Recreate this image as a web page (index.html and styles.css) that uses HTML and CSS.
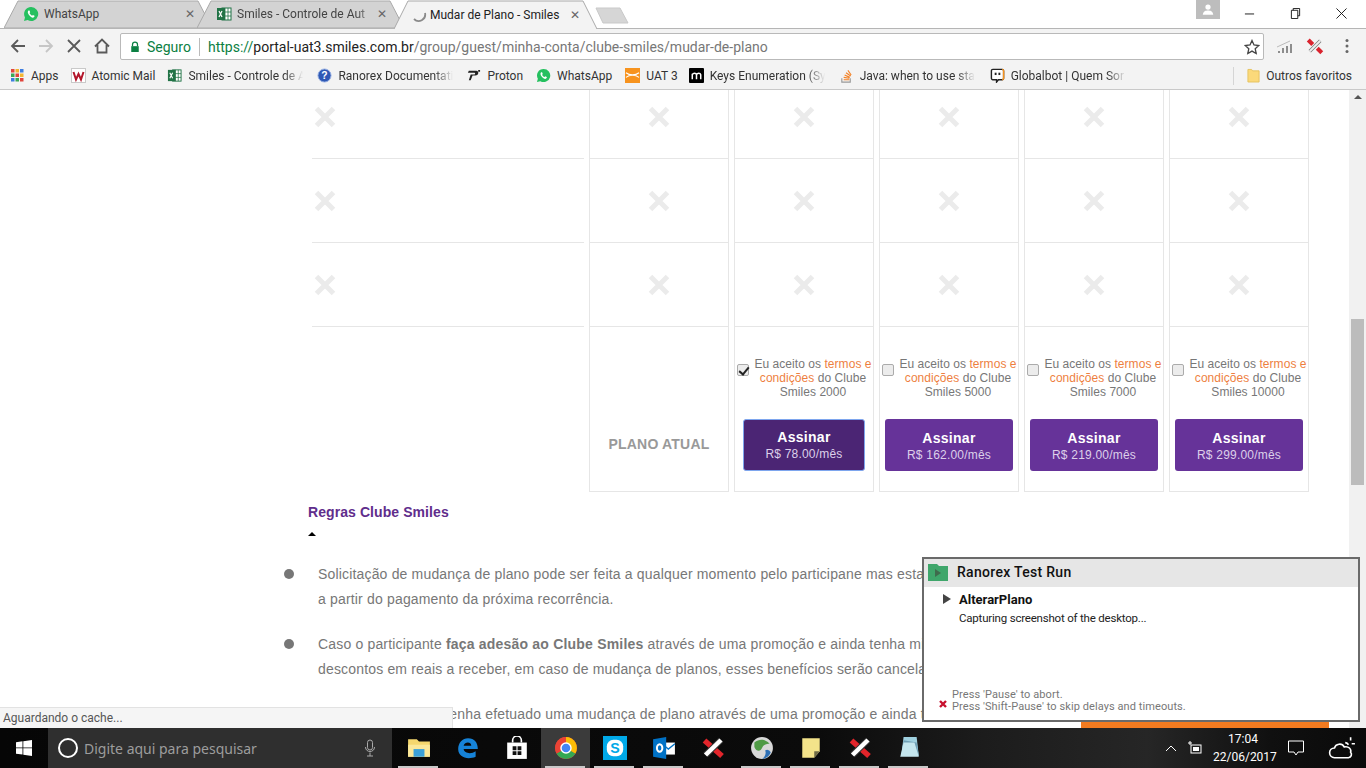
FILE: index.html
```html
<!DOCTYPE html>
<html lang="pt-BR">
<head>
  <meta charset="UTF-8">
  <meta name="viewport" content="width=device-width, initial-scale=1.0">
  <title>Mudar de Plano - Smiles</title>
  <link rel="stylesheet" href="styles.css">
</head>
<body>
  <svg width="0" height="0" class="defs">
    <defs>
      <symbol id="cross" viewBox="0 0 22 22">
        <path d="M2.500 2.500l17 17M19.500 2.500l-17 17" stroke="#ebebeb" stroke-width="5" fill="none"/>
      </symbol>
      <symbol id="whatsapp" viewBox="0 0 16 16">
        <path d="M8 1a7 7 0 0 0-6 10.500L1 15l3.600-1A7 7 0 1 0 8 1z" fill="#25c05f"/>
        <path d="M5.500 4.500c-1 1-1 2.500.5 4.500s3.500 3 4.500 2.500 1.200-1.500 1-1.800l-1.600-.8-.8.8c-1-.3-2.200-1.500-2.600-2.600l.7-.8-.7-1.700c-.3-.2-.7-.3-1 0z" fill="#fff"/>
      </symbol>
      <symbol id="excel" viewBox="0 0 16 16">
        <rect x="6" y="2" width="9" height="12" fill="#fff" stroke="#217346"/>
        <path d="M9 2v12M12 2v12M6 6h9M6 10h9" stroke="#217346" stroke-width=".8"/>
        <rect x="1" y="2" width="8" height="12" fill="#217346"/>
        <path d="M3 5l3 6M6 5l-3 6" stroke="#fff" stroke-width="1.200"/>
      </symbol>
      <symbol id="ranorex" viewBox="0 0 24 24">
        <path d="M3.500 4.500L21 20" stroke="#e2252b" stroke-width="5.500" fill="none"/>
        <path d="M20 4L4.500 19" stroke="#333" stroke-width="6.500" fill="none"/>
        <path d="M20 4L4.500 19" stroke="#fff" stroke-width="4.500" fill="none"/>
      </symbol>
    </defs>
  </svg>

  <div class="screen">
    <header class="browser">
      <div class="tabstrip">
        <div class="tab tab-first">
          <svg class="tab-shape" viewBox="0 0 208 28" preserveAspectRatio="none"><path d="M0 28L14 1H194L208 28z" fill="#d3d3d3" stroke="#a9a9a9"/></svg>
          <svg class="tab-icon"><use href="#whatsapp"/></svg>
          <span class="tab-title">WhatsApp</span>
          <span class="tab-close">✕</span>
        </div>
        <div class="tab tab-second">
          <svg class="tab-shape" viewBox="0 0 207 28" preserveAspectRatio="none"><path d="M0 28L14 1H193L207 28z" fill="#d3d3d3" stroke="#a9a9a9"/></svg>
          <svg class="tab-icon"><use href="#excel"/></svg>
          <span class="tab-title tab-fade">Smiles - Controle de Aut</span>
          <span class="tab-close">✕</span>
        </div>
        <div class="tab tab-active">
          <svg class="tab-shape" viewBox="0 0 203 29" preserveAspectRatio="none"><path d="M0 29L14 1H189L203 29" fill="#f3f3f3" stroke="#a9a9a9"/></svg>
          <svg class="tab-icon" viewBox="0 0 16 16"><path d="M14 6a6.500 6.500 0 0 1-11 6" fill="none" stroke="#8a8a8a" stroke-width="1.800"/></svg>
          <span class="tab-title">Mudar de Plano - Smiles</span>
          <span class="tab-close">✕</span>
        </div>
        <svg class="newtab" viewBox="0 0 34 17"><path d="M1 1H25L33 16H8z" fill="#d6d6d6" stroke="#c9c9c9"/></svg>
        <div class="window-btns">
          <span class="profile">
            <svg viewBox="0 0 24 24" width="14" height="14"><circle cx="12" cy="7" r="4.500" fill="#fff"/><path d="M3 20c1-6 5-7 9-7s8 1 9 7z" fill="#fff"/></svg>
          </span>
          <svg class="win-icon" viewBox="0 0 12 12"><path d="M1 6.500h10" stroke="#111"/></svg>
          <svg class="win-icon" viewBox="0 0 12 12"><path d="M3.500 2.500v-2h7v8h-2M1.500 2.500h7v9h-7z" fill="none" stroke="#111"/></svg>
          <svg class="win-icon" viewBox="0 0 12 12"><path d="M.5.500l11 11M11.500.500l-11 11" stroke="#111"/></svg>
        </div>
      </div>

      <div class="toolbar">
        <svg class="nav-btn" viewBox="0 0 16 16"><path d="M15 8H2M8 2L2 8l6 6" fill="none" stroke="#5a5a5a" stroke-width="1.800"/></svg>
        <svg class="nav-btn" viewBox="0 0 16 16"><path d="M1 8h13M8 2l6 6-6 6" fill="none" stroke="#c6c6c6" stroke-width="1.800"/></svg>
        <svg class="nav-btn" viewBox="0 0 16 16"><path d="M2 2l12 12M14 2L2 14" fill="none" stroke="#5a5a5a" stroke-width="1.800"/></svg>
        <svg class="nav-btn" viewBox="0 0 16 16"><path d="M1 8.500L8 1.500l7 7M3.500 7v7.500h9V7" fill="none" stroke="#5a5a5a" stroke-width="1.800"/></svg>
        <div class="omnibox">
          <svg class="lock" viewBox="0 0 12 14"><path d="M3 6V4a3 3 0 0 1 6 0v2" fill="none" stroke="#0b8043" stroke-width="1.500"/><rect x="1.500" y="6" width="9" height="7" fill="#0b8043"/></svg>
          <span class="secure">Seguro</span>
          <span class="omni-sep"></span>
          <span class="url"><span class="url-scheme">https://</span><span class="url-host">portal-uat3.smiles.com.br</span>/group/guest/minha-conta/clube-smiles/mudar-de-plano</span>
          <svg class="star" viewBox="0 0 16 16"><path d="M8 1.500l2 4.500 4.800.500-3.600 3.200 1 4.800L8 12.100l-4.200 2.400 1-4.800L1.200 6.500 6 6z" fill="none" stroke="#444" stroke-width="1.300"/></svg>
        </div>
        <svg class="ext-icon" viewBox="0 0 18 14"><path d="M1 8l13-6" stroke="#bbb"/><path d="M2 14v-2h2v2zM6 14v-5h2v5zM10 14V7h2v7zM14 14V5h2v9z" fill="#8d8d8d"/></svg>
        <svg class="ext-icon" viewBox="0 0 24 24"><path d="M19 5L5 19" stroke="#777" stroke-width="4.500"/><path d="M19 5L5 19" stroke="#eee" stroke-width="2.500"/><path d="M3 4l6 6M15 15l6 6" stroke="#d9232e" stroke-width="5.500"/></svg>
        <svg class="ext-menu" viewBox="0 0 4 16"><circle cx="2" cy="2.500" r="1.500" fill="#666"/><circle cx="2" cy="8" r="1.500" fill="#666"/><circle cx="2" cy="13.500" r="1.500" fill="#666"/></svg>
      </div>

      <div class="bookmarks">
        <a class="bm">
          <svg class="bm-icon" viewBox="0 0 15 15">
            <rect x="1" y="1" width="3.500" height="3.500" fill="#e1453c"/><rect x="5.500" y="1" width="3.500" height="3.500" fill="#f2b632"/><rect x="10" y="1" width="3.500" height="3.500" fill="#3d7de0"/>
            <rect x="1" y="5.500" width="3.500" height="3.500" fill="#3aa757"/><rect x="5.500" y="5.500" width="3.500" height="3.500" fill="#e1453c"/><rect x="10" y="5.500" width="3.500" height="3.500" fill="#f2b632"/>
            <rect x="1" y="10" width="3.500" height="3.500" fill="#3d7de0"/><rect x="5.500" y="10" width="3.500" height="3.500" fill="#3aa757"/><rect x="10" y="10" width="3.500" height="3.500" fill="#e1453c"/>
          </svg>Apps</a>
        <a class="bm">
          <svg class="bm-icon" viewBox="0 0 15 15"><rect x=".5" y=".5" width="14" height="14" fill="#fff" stroke="#c9c9c9"/><path d="M2.500 4l2.500 7.500L7.500 6l2.500 5.500L12.500 4" fill="none" stroke="#b3162b" stroke-width="2"/></svg>Atomic Mail</a>
        <a class="bm bm-long">
          <svg class="bm-icon"><use href="#excel"/></svg><span class="bm-fade">Smiles - Controle de A</span></a>
        <a class="bm bm-long">
          <svg class="bm-icon" viewBox="0 0 16 16"><circle cx="8" cy="8" r="7" fill="#2f59b5" stroke="#9db4e4"/><text x="8" y="12" class="bm-q">?</text></svg><span class="bm-fade">Ranorex Documentati</span></a>
        <a class="bm">
          <svg class="bm-icon" viewBox="0 0 16 16"><path d="M3 3h8c3 0 3 5-1 5H7l-2 5H3l2-6h4c1 0 1-2 0-2H2zM13 2h2v2h-2z" fill="#222"/></svg>Proton</a>
        <a class="bm">
          <svg class="bm-icon"><use href="#whatsapp"/></svg>WhatsApp</a>
        <a class="bm">
          <svg class="bm-icon" viewBox="0 0 16 16"><rect width="16" height="16" fill="#f7931e"/><path d="M1 5c4 3 10 3 14 0M1 10c4-3 10-3 14 0" fill="none" stroke="#fff" stroke-width="1.200"/></svg>UAT 3</a>
        <a class="bm bm-long">
          <svg class="bm-icon" viewBox="0 0 16 16"><rect width="16" height="16" rx="1" fill="#000"/><path d="M3.500 12V6M3.500 7c1-2 4-2 4.500 0v5M8 7c1-2 4-2 4.500 0v5" fill="none" stroke="#fff" stroke-width="1.600"/></svg><span class="bm-fade">Keys Enumeration (Sy</span></a>
        <a class="bm bm-long">
          <svg class="bm-icon" viewBox="0 0 16 16"><path d="M3 11v4h9v-4" fill="none" stroke="#9a9a9a" stroke-width="1.200"/><path d="M5 12.500h6M5 10l6 1M6 7.500l5.500 2.500M7.500 5l5 3.500M9.500 2.500l3.500 5" fill="none" stroke="#f48024" stroke-width="1.200"/></svg><span class="bm-fade">Java: when to use stat</span></a>
        <a class="bm bm-long">
          <svg class="bm-icon" viewBox="0 0 16 16"><path d="M3 1.500h10a1.500 1.500 0 0 1 1.500 1.500v8a1.500 1.500 0 0 1-1.500 1.500H9l-2 2.500v-2.500H3A1.500 1.500 0 0 1 1.500 11V3A1.500 1.500 0 0 1 3 1.500z" fill="#fff" stroke="#222" stroke-width="1.500"/><path d="M13 1.500a1.500 1.500 0 0 1 1.500 1.500v8a1.500 1.500 0 0 1-1.500 1.500" fill="none" stroke="#f7931e" stroke-width="1.500"/><rect x="5" y="5" width="2" height="2.500" fill="#222"/><rect x="9" y="5" width="2" height="2.500" fill="#222"/></svg><span class="bm-fade">Globalbot | Quem Sor</span></a>
        <span class="bm-spacer"></span>
        <span class="bm-sep"></span>
        <a class="bm bm-other">
          <svg class="bm-folder" viewBox="0 0 14 16"><path d="M1 1.500h4l1 1.500h7v12H1z" fill="#fbd97a" stroke="#e6c25e"/></svg>Outros favoritos</a>
      </div>
    </header>

    <main class="viewport">
      <div class="page">
        <section class="plans">
          <div class="plan-row">
            <div class="feature"><svg class="cross"><use href="#cross"/></svg></div>
            <div class="plan-cell"><svg class="cross"><use href="#cross"/></svg></div>
            <div class="plan-cell"><svg class="cross"><use href="#cross"/></svg></div>
            <div class="plan-cell"><svg class="cross"><use href="#cross"/></svg></div>
            <div class="plan-cell"><svg class="cross"><use href="#cross"/></svg></div>
            <div class="plan-cell"><svg class="cross"><use href="#cross"/></svg></div>
          </div>
          <div class="plan-row">
            <div class="feature"><svg class="cross"><use href="#cross"/></svg></div>
            <div class="plan-cell"><svg class="cross"><use href="#cross"/></svg></div>
            <div class="plan-cell"><svg class="cross"><use href="#cross"/></svg></div>
            <div class="plan-cell"><svg class="cross"><use href="#cross"/></svg></div>
            <div class="plan-cell"><svg class="cross"><use href="#cross"/></svg></div>
            <div class="plan-cell"><svg class="cross"><use href="#cross"/></svg></div>
          </div>
          <div class="plan-row">
            <div class="feature"><svg class="cross"><use href="#cross"/></svg></div>
            <div class="plan-cell"><svg class="cross"><use href="#cross"/></svg></div>
            <div class="plan-cell"><svg class="cross"><use href="#cross"/></svg></div>
            <div class="plan-cell"><svg class="cross"><use href="#cross"/></svg></div>
            <div class="plan-cell"><svg class="cross"><use href="#cross"/></svg></div>
            <div class="plan-cell"><svg class="cross"><use href="#cross"/></svg></div>
          </div>
          <div class="plan-row plan-row-last">
            <div class="feature-empty"></div>
            <div class="plan-cell plan-current">PLANO ATUAL</div>
            <div class="plan-cell plan-buy">
              <label class="terms"><input type="checkbox" checked><span>Eu aceito os <a>termos e</a><br><a>condições</a> do Clube<br>Smiles 2000</span></label>
              <button class="subscribe subscribe-focus"><b>Assinar</b><span>R$ 78.00/mês</span></button>
            </div>
            <div class="plan-cell plan-buy">
              <label class="terms"><input type="checkbox"><span>Eu aceito os <a>termos e</a><br><a>condições</a> do Clube<br>Smiles 5000</span></label>
              <button class="subscribe"><b>Assinar</b><span>R$ 162.00/mês</span></button>
            </div>
            <div class="plan-cell plan-buy">
              <label class="terms"><input type="checkbox"><span>Eu aceito os <a>termos e</a><br><a>condições</a> do Clube<br>Smiles 7000</span></label>
              <button class="subscribe"><b>Assinar</b><span>R$ 219.00/mês</span></button>
            </div>
            <div class="plan-cell plan-buy">
              <label class="terms"><input type="checkbox"><span>Eu aceito os <a>termos e</a><br><a>condições</a> do Clube<br>Smiles 10000</span></label>
              <button class="subscribe"><b>Assinar</b><span>R$ 299.00/mês</span></button>
            </div>
          </div>
        </section>

        <section class="rules">
          <h3 class="rules-title">Regras Clube Smiles</h3>
          <span class="rules-caret"></span>
          <ul class="rules-list">
            <li>Solicitação de mudança de plano pode ser feita a qualquer momento pelo participane mas esta<br>a partir do pagamento da próxima recorrência.</li>
            <li>Caso o participante <strong>faça adesão ao Clube Smiles</strong> através de uma promoção e ainda tenha mi<br>descontos em reais a receber, em caso de mudança de planos, esses benefícios serão cancela</li>
            <li>Se o participante já tenha efetuado uma mudança de plano através de uma promoção e ainda t</li>
          </ul>
        </section>
      </div>
      <div class="orange-bar"></div>
      <div class="scrollbar">
        <span class="scroll-up"></span>
        <span class="scroll-thumb"></span>
      </div>
      <div class="status-bubble">Aguardando o cache...</div>

      <aside class="ranorex">
        <div class="ranorex-head">
          <svg class="ranorex-logo" viewBox="0 0 20 17"><path d="M0 0h9l2 2h9v15H0z" fill="#3fa66b"/><path d="M7 5l6 4-6 4z" fill="#3f6b4d"/></svg>
          <span>Ranorex Test Run</span>
        </div>
        <div class="ranorex-body">
          <div class="ranorex-case"><span class="ranorex-play"></span>AlterarPlano</div>
          <div class="ranorex-msg">Capturing screenshot of the desktop...</div>
        </div>
        <div class="ranorex-foot">
          <svg class="ranorex-x" viewBox="0 0 8 8"><path d="M1 1l6 6M7 1L1 7" stroke="#c8102e" stroke-width="2.400"/></svg>
          <span>Press 'Pause' to abort.<br>Press 'Shift-Pause' to skip delays and timeouts.</span>
        </div>
      </aside>
    </main>

    <footer class="taskbar">
      <span class="start">
        <svg viewBox="0 0 16 16" width="16" height="16"><path d="M0 2.200l6.500-.9v6.200H0zM7.300 1.200L16 0v7.500H7.300zM0 8.300h6.500v6.300L0 13.700zM7.300 8.300H16V16l-8.700-1.200z" fill="#fff"/></svg>
      </span>
      <div class="search">
        <span class="cortana"></span>
        <span class="search-text">Digite aqui para pesquisar</span>
        <svg class="mic" viewBox="0 0 12 18"><rect x="3.500" y="1" width="5" height="10" rx="2.500" fill="none" stroke="#aaa"/><path d="M1.500 8c0 6 9 6 9 0M6 13.500V17M3 17h6" fill="none" stroke="#aaa"/></svg>
      </div>
      <div class="task-icons">
        <span class="task task-run"><svg viewBox="0 0 22 20"><path d="M1 2h8l2 2h10v14H1z" fill="#f5d76e"/><rect x="1" y="7" width="20" height="11" fill="#fbe89a"/><rect x="6" y="11" width="10" height="7" fill="#3aa0d8"/></svg></span>
        <span class="task"><svg viewBox="0 0 22 22"><path d="M11 2c6 0 9 4 9 10H7c.5 4 7 5 11 2v5c-7 3-16 1-16-7C2 6 6 2 11 2zm3 7c0-4-6-4-7 0z" fill="#1683d8"/></svg></span>
        <span class="task"><svg viewBox="0 0 22 22"><path d="M7 6V4a4 4 0 0 1 8 0v2" fill="none" stroke="#fff" stroke-width="1.500"/><path d="M2 6h18v15H2z" fill="#fff"/><path d="M7 9.500h3.500v3.500H7zM11.500 9.500H15v3.500h-3.500zM7 14h3.500v3.500H7zM11.500 14H15v3.500h-3.500z" fill="#111"/></svg></span>
        <span class="task task-open task-run"><svg viewBox="0 0 22 22"><circle cx="11" cy="11" r="10" fill="#ea4335"/><path d="M11 11L19.660 16A10 10 0 0 1 2.340 16z" fill="#34a853"/><path d="M11 1a10 10 0 0 1 8.660 15L11 11z" fill="#fbbc05"/><path d="M11 1a10 10 0 0 0-8.660 15L11 11z" fill="#ea4335"/><circle cx="11" cy="11" r="4.600" fill="#4285f4" stroke="#fff" stroke-width="1.300"/></svg></span>
        <span class="task task-run"><svg viewBox="0 0 22 22"><rect width="22" height="22" fill="#00a9e8"/><rect x="3.500" y="3.500" width="15" height="15" rx="6" fill="#fff"/><text x="11" y="16" class="task-s">S</text></svg></span>
        <span class="task task-run"><svg viewBox="0 0 22 22"><rect x="9" y="6" width="12" height="11" fill="#fff"/><path d="M9 7l6 5 6-5" fill="none" stroke="#0072c6" stroke-width="1.200"/><path d="M1 3l12-2v20L1 19z" fill="#0072c6"/><ellipse cx="7" cy="11" rx="2.500" ry="3.500" fill="none" stroke="#fff" stroke-width="1.800"/></svg></span>
        <span class="task"><svg viewBox="0 0 24 24"><use href="#ranorex"/></svg></span>
        <span class="task task-run"><svg viewBox="0 0 22 22"><circle cx="11" cy="11" r="10" fill="#d8d8d8"/><path d="M4 6c5-4 10-3 14 1-3 0-6 1-7 4s-5 4-7-1z" fill="#4f9a45"/><path d="M14 13a4 4 0 0 1 5 2c-1 3-4 6-8 6 3-2 4-5 3-8z" fill="#2c6fb5"/></svg></span>
        <span class="task task-run"><svg viewBox="0 0 22 22"><path d="M3 2h16v12l-5 6H3z" fill="#f3e38a"/><path d="M14 20v-6h5z" fill="#6e6a45"/></svg></span>
        <span class="task task-run"><svg viewBox="0 0 24 24"><use href="#ranorex"/></svg></span>
        <span class="task task-run"><svg viewBox="0 0 22 22"><path d="M6 1h12l2 17H4z" fill="#9fd0df"/><path d="M4 18l2-14 12 2 2 12z" fill="#6f9fb5"/><path d="M3 19l3-13h10l4 13z" fill="#c5e6ee"/></svg></span>
      </div>
      <div class="tray">
        <svg class="tray-caret" viewBox="0 0 12 7"><path d="M1 6l5-5 5 5" fill="none" stroke="#fff"/></svg>
        <svg class="tray-power" viewBox="0 0 16 14"><rect x="4" y="4" width="10" height="8" fill="none" stroke="#fff"/><rect x="6" y="6" width="6" height="4" fill="#fff"/><path d="M1 2h4M3 0v4" stroke="#fff"/></svg>
        <div class="clock">17:04<br>22/06/2017</div>
        <svg class="tray-notify" viewBox="0 0 16 16"><path d="M.5 1h15v11H10l-2 3-2-3H.5z" fill="none" stroke="#fff"/></svg>
        <svg class="tray-weather" viewBox="0 0 26 24"><path d="M6 21a4.500 4.500 0 0 1 0-9c1-4 7-5 9-1 4-1 7 2 6 5a3 3 0 0 1-2 5z" fill="none" stroke="#fff" stroke-width="1.500"/><path d="M19 9a4 4 0 0 0-3-2M21 2v3M25 8h-3" stroke="#fff" stroke-width="1.500" fill="none"/></svg>
      </div>
    </footer>
  </div>
</body>
</html>
```

FILE: styles.css
```css
* {
  box-sizing: border-box;
}
html, body {
  margin: 0;
  padding: 0;
  overflow: hidden;
}
.defs {
  position: absolute;
}
.screen {
  width: 1366px;
  height: 768px;
  display: flex;
  flex-direction: column;
  overflow: hidden;
  background: #fff;
  font-family: "Liberation Sans", Arial, sans-serif;
}

/* browser chrome */
.browser {
  font-family: Roboto, "Noto Sans", sans-serif;
  color: #333;
}
.tabstrip {
  height: 28px;
  display: flex;
  align-items: flex-start;
  padding-left: 4px;
  background: #fff;
  position: relative;
  z-index: 1;
}
.tab {
  position: relative;
  height: 28px;
  display: flex;
  align-items: center;
  font-size: 12px;
  color: #444;
  padding: 0 17px 0 19px;
}
.tab-first {
  width: 208px;
}
.tab-second {
  width: 207px;
  margin-left: -15px;
}
.tab-active {
  width: 203px;
  height: 29px;
  margin-left: -10px;
  padding-left: 17px;
  color: #222;
}
.tab-shape {
  position: absolute;
  top: 0;
  left: 0;
  width: 100%;
  height: 100%;
}
.tab-icon {
  position: relative;
  width: 16px;
  height: 16px;
  flex: none;
  margin-right: 5px;
}
.tab-active .tab-icon {
  margin-right: 3px;
}
.tab-title {
  position: relative;
  flex: 1;
  min-width: 0;
  overflow: hidden;
  white-space: nowrap;
}
.tab-fade {
  -webkit-mask-image: linear-gradient(to right, #000 85%, transparent);
  mask-image: linear-gradient(to right, #000 85%, transparent);
}
.tab-close {
  position: relative;
  font-size: 12px;
  color: #666;
}
.newtab {
  width: 34px;
  height: 17px;
  margin: 7px 0 0 -2px;
}
.window-btns {
  margin-left: auto;
  display: flex;
  height: 20px;
}
.profile {
  width: 24px;
  height: 19px;
  background: #bdbdbd;
  display: flex;
  align-items: center;
  justify-content: center;
  margin-right: 24px;
}
.win-icon {
  width: 11px;
  height: 11px;
  margin: 8px 35px 0 0;
}
.win-icon:last-child {
  margin-right: 19px;
}

.toolbar {
  height: 34px;
  display: flex;
  align-items: center;
  background: #f3f3f3;
  padding: 1px 0 0 10px;
  border-top: 1px solid #b5b5b5;
}
.nav-btn {
  width: 16px;
  height: 16px;
  margin-right: 12px;
}
.nav-btn:nth-child(4) {
  margin-right: 10px;
}
.omnibox {
  width: 1144px;
  height: 27px;
  background: #fff;
  border: 1px solid #b9b9b9;
  border-radius: 2px;
  display: flex;
  align-items: center;
  font-size: 14px;
  color: #777;
  padding: 1px 0 0 9px;
}
.lock {
  width: 10px;
  height: 12px;
  margin-right: 7px;
}
.secure {
  color: #0b8043;
}
.omni-sep {
  width: 1px;
  height: 18px;
  background: #bbb;
  margin: 0 8px;
}
.url {
  flex: 1;
  white-space: nowrap;
  overflow: hidden;
}
.url-scheme {
  color: #0b8043;
}
.url-host {
  color: #222;
}
.star {
  width: 16px;
  height: 16px;
  margin-right: 3px;
}
.ext-icon {
  width: 18px;
  height: 18px;
  margin-left: 12px;
}
.ext-menu {
  width: 4px;
  height: 16px;
  margin-left: 21px;
}

.bookmarks {
  height: 28px;
  display: flex;
  align-items: center;
  background: #f3f3f3;
  padding-left: 10px;
  gap: 13px;
  font-size: 12px;
  border-bottom: 1px solid #c9c9c9;
}
.bm {
  display: flex;
  align-items: center;
  white-space: nowrap;
}
.bm:nth-child(2), .bm:nth-child(3) {
  margin-left: -1px;
}
.bm:nth-child(4) {
  margin-left: 1px;
}
.bm:nth-child(8) {
  margin-left: -2px;
}
.bm:nth-child(9) {
  margin-left: 1px;
}
.bm:nth-child(10) {
  margin-left: 2px;
}
.bm-icon {
  width: 15px;
  height: 15px;
  flex: none;
  margin-right: 6px;
}
.bm-folder {
  width: 13px;
  height: 15px;
  margin-right: 6px;
}
.bm-q {
  font-size: 11px;
  font-weight: bold;
  fill: #fff;
  text-anchor: middle;
  font-family: "Liberation Sans", sans-serif;
}
.bm-fade {
  width: 120px;
  margin-right: -5px;
  -webkit-mask-image: linear-gradient(to right, #000 80%, transparent 96%);
  mask-image: linear-gradient(to right, #000 80%, transparent 96%);
}
.bm-spacer {
  flex: 1;
}
.bm-sep {
  width: 1px;
  height: 18px;
  background: #d5d5d5;
}
.bm-other {
  margin-right: 14px;
}

/* page */
.viewport {
  position: relative;
  height: 638px;
  overflow: hidden;
  background: #fff;
}
.page {
  margin-top: -15px;
  padding-left: 284px;
}
.plans {
  padding-left: 28px;
}
.plan-row {
  display: grid;
  grid-template-columns: 272px repeat(5, 140px);
  column-gap: 5px;
  height: 84px;
}
.plan-row-last {
  height: 165px;
}
.feature {
  border-bottom: 1px solid #e6e6e6;
  display: flex;
  align-items: center;
  padding-left: 2px;
}
.plan-cell {
  border: 1px solid #e6e6e6;
  border-top: none;
  display: flex;
  align-items: center;
  justify-content: center;
}
.cross {
  width: 22px;
  height: 22px;
}
.plan-current {
  font-size: 14px;
  font-weight: bold;
  color: #999;
  letter-spacing: .2px;
  padding-top: 70px;
}
.plan-buy {
  flex-direction: column;
  justify-content: flex-start;
  padding-top: 30px;
}
.terms {
  display: flex;
  align-items: flex-start;
  width: 138px;
  padding: 0 1px 0 2px;
  font-size: 12px;
  line-height: 14px;
  color: #777;
  letter-spacing: .05px;
  text-align: center;
  white-space: nowrap;
}
.terms span {
  flex: 1;
}
.terms input {
  appearance: none;
  -webkit-appearance: none;
  position: relative;
  width: 12px;
  height: 12px;
  margin: 7px 5px 0 0;
  flex: none;
  background: #ececec;
  border: 1px solid #ababab;
  border-radius: 2px;
}
.terms input:checked::after {
  content: "";
  position: absolute;
  left: 3px;
  top: 0;
  width: 4px;
  height: 8px;
  border: solid #222;
  border-width: 0 2px 2px 0;
  transform: rotate(40deg);
}
.terms a {
  color: #ee7f3f;
}
.subscribe {
  margin-top: 20px;
  height: 52px;
  padding: 2px 22.5px 0;
  border: none;
  border-radius: 3px;
  background: #663399;
  color: #fff;
  font-family: "Liberation Sans", Arial, sans-serif;
  display: flex;
  flex-direction: column;
  align-items: center;
  justify-content: center;
}
.subscribe b {
  font-size: 14px;
  letter-spacing: .3px;
  line-height: 17px;
}
.subscribe span {
  font-size: 12px;
  line-height: 16px;
  color: #ddd0ea;
  letter-spacing: .2px;
}
.subscribe-focus {
  background: #4b2574;
  border: 1px solid #7ea6ee;
  padding: 1px 21px 0;
}

.rules {
  padding: 12px 0 0 24px;
}
.rules-title {
  margin: 0;
  font-size: 14px;
  line-height: 16px;
  font-weight: bold;
  color: #5f2d8c;
  letter-spacing: .08px;
}
.rules-caret {
  display: block;
  width: 0;
  margin: 12px 0 0 0;
  border: 4px solid transparent;
  border-top: none;
  border-bottom-color: #000;
}
.rules-list {
  list-style: none;
  margin: 26px 0 0 -24px;
  padding: 0;
  font-size: 14px;
  line-height: 25px;
  color: #777;
  letter-spacing: .17px;
  white-space: nowrap;
}
.rules-list li {
  position: relative;
  padding-left: 34px;
  margin-bottom: 20px;
}
.rules-list li::before {
  content: "";
  position: absolute;
  left: 0;
  top: 7px;
  width: 10px;
  height: 10px;
  border-radius: 50%;
  background: #777;
}
.rules-list strong {
  letter-spacing: .2px;
}
.orange-bar {
  position: absolute;
  left: 1081px;
  bottom: 0;
  width: 248px;
  height: 6px;
  background: #f37b20;
}
.scrollbar {
  position: absolute;
  right: 0;
  top: 0;
  bottom: 0;
  width: 17px;
  background: #f1f1f1;
}
.scroll-up {
  position: absolute;
  left: 5px;
  top: 5px;
  border: 4px solid transparent;
  border-top: none;
  border-bottom-color: #555;
}
.scroll-thumb {
  position: absolute;
  left: 2px;
  top: 229px;
  width: 13px;
  height: 166px;
  background: #bcbcbc;
}
.status-bubble {
  position: absolute;
  left: 0;
  bottom: 0;
  width: 453px;
  height: 21px;
  background: #f5f5f5;
  border-top: 1px solid #e2e2e2;
  border-right: 1px solid #e2e2e2;
  font-family: Roboto, sans-serif;
  font-size: 12px;
  line-height: 20px;
  padding-left: 3px;
  color: #555;
}

/* ranorex popup */
.ranorex {
  position: absolute;
  left: 922px;
  top: 467px;
  width: 438px;
  height: 165px;
  background: #fff;
  border: 2px solid #6a6a6a;
  font-family: Roboto, sans-serif;
  display: flex;
  flex-direction: column;
}
.ranorex-head {
  height: 28px;
  background: #e6e6e6;
  display: flex;
  align-items: center;
  padding: 0 0 2px 4px;
  font-size: 14px;
  font-weight: 500;
  letter-spacing: .3px;
  color: #111;
}
.ranorex-logo {
  width: 20px;
  height: 17px;
  margin-right: 9px;
}
.ranorex-body {
  flex: 1;
  padding: 3px 0 0 19px;
  font-size: 11.5px;
  letter-spacing: -.2px;
  color: #222;
}
.ranorex-case {
  display: flex;
  align-items: center;
  font-size: 13px;
  letter-spacing: 0;
  font-weight: 700;
  color: #111;
  height: 18px;
}
.ranorex-play {
  width: 0;
  margin-right: 8px;
  border: 5px solid transparent;
  border-right: none;
  border-left: 8px solid #444;
}
.ranorex-msg {
  margin: 1px 0 0 16px;
  line-height: 18px;
}
.ranorex-foot {
  display: flex;
  align-items: center;
  padding: 0 0 7px 15px;
  font-size: 11px;
  letter-spacing: .08px;
  line-height: 12px;
  color: #777;
}
.ranorex-x {
  width: 8px;
  height: 8px;
  margin: 6px 5px 0 0;
}

/* windows taskbar */
.taskbar {
  flex: 1;
  display: flex;
  align-items: center;
  color: #fff;
  background: linear-gradient(to right, #060606, #0b0b0b 60%, #1c1c1c 72%, #262626 84%, #101010 93%, #0a0a0a);
  font-family: "Noto Sans", sans-serif;
}
.start {
  width: 48px;
  display: flex;
  justify-content: center;
}
.search {
  width: 344px;
  height: 40px;
  background: #2f2f2f;
  display: flex;
  align-items: center;
  padding-left: 10px;
  color: #9d9d9d;
  font-size: 14px;
}
.cortana {
  width: 20px;
  height: 20px;
  border: 2px solid #fff;
  border-radius: 50%;
  margin-right: 6px;
}
.search-text {
  flex: 1;
}
.mic {
  width: 12px;
  height: 18px;
  margin-right: 16px;
}
.task-icons {
  display: flex;
  padding-left: 2px;
}
.task {
  position: relative;
  width: 49px;
  height: 40px;
  display: flex;
  align-items: center;
  justify-content: center;
}
.task svg {
  width: 24px;
  height: 24px;
}
.task-open {
  background: #3b3b3b;
}
.task-run::after {
  content: "";
  position: absolute;
  left: 4px;
  right: 5px;
  bottom: 0;
  height: 2px;
  background: #c8c8c8;
}
.task-s {
  font: bold 13px "Liberation Sans", sans-serif;
  fill: #00a9e8;
  text-anchor: middle;
}
.tray {
  margin-left: auto;
  display: flex;
  align-items: center;
  padding-right: 10px;
}
.tray-caret {
  width: 12px;
  height: 7px;
  margin-right: 10px;
}
.tray-power {
  width: 16px;
  height: 14px;
  margin-right: 10px;
}
.clock {
  width: 60px;
  text-align: center;
  font-family: Roboto, sans-serif;
  font-size: 12px;
  line-height: 18px;
}
.tray-notify {
  width: 16px;
  height: 16px;
  margin: 0 24px 0 15px;
}
.tray-weather {
  width: 28px;
  height: 26px;
}
```
